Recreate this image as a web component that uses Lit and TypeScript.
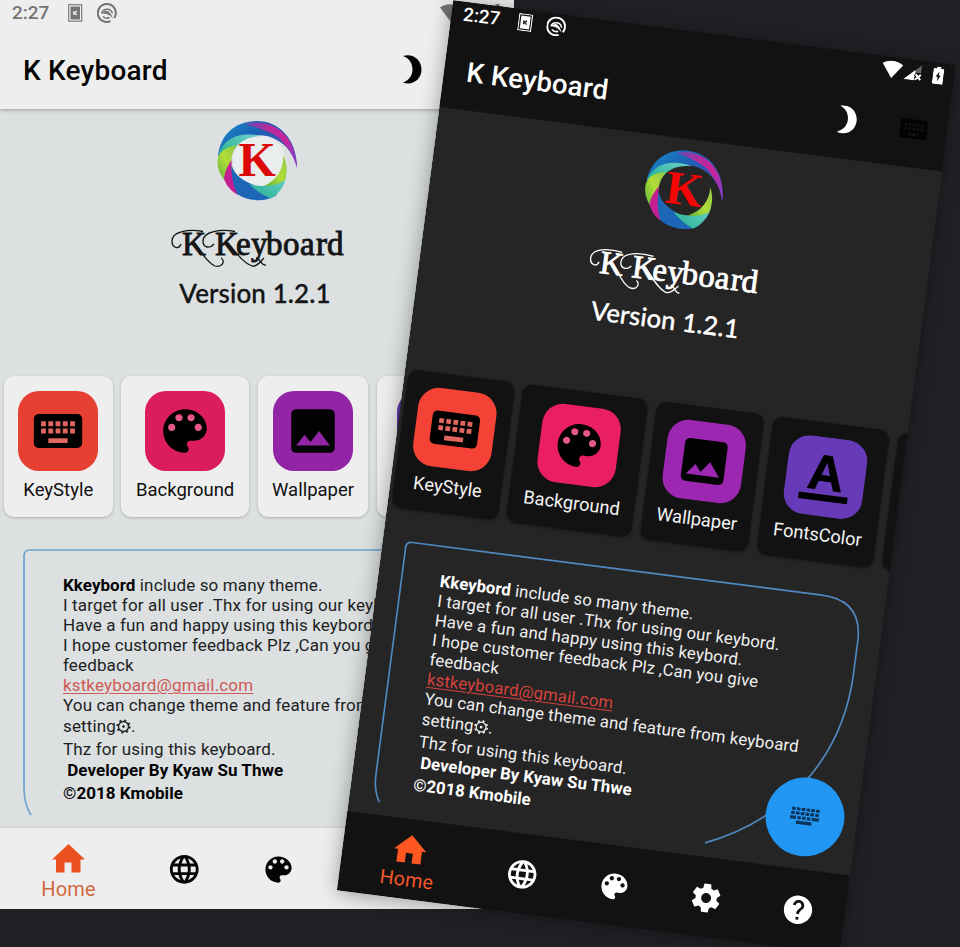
import { LitElement, html, svg, css } from "lit";
import { customElement, property } from "lit/decorators.js";

const KEYBOARD =
  "M20 5H4c-1.1 0-1.99.9-1.99 2L2 17c0 1.1.9 2 2 2h16c1.1 0 2-.9 2-2V7c0-1.1-.9-2-2-2zm-9 3h2v2h-2V8zm0 3h2v2h-2v-2zM8 8h2v2H8V8zm0 3h2v2H8v-2zm-1 2H5v-2h2v2zm0-3H5V8h2v2zm9 7H8v-2h8v2zm0-4h-2v-2h2v2zm0-3h-2V8h2v2zm3 3h-2v-2h2v2zm0-3h-2V8h2v2z";
const PALETTE =
  "M12 3c-4.97 0-9 4.03-9 9s4.03 9 9 9c.83 0 1.5-.67 1.5-1.5 0-.39-.15-.74-.39-1.01-.23-.26-.38-.61-.38-.99 0-.83.67-1.5 1.5-1.5H16c2.76 0 5-2.24 5-5 0-4.42-4.03-8-9-8zm-5.5 9c-.83 0-1.5-.67-1.5-1.5S5.67 9 6.5 9 8 9.67 8 10.5 7.33 12 6.5 12zm3-4C8.67 8 8 7.33 8 6.5S8.67 5 9.5 5s1.5.67 1.5 1.5S10.33 8 9.5 8zm5 0c-.83 0-1.5-.67-1.5-1.5S13.67 5 14.5 5s1.5.67 1.5 1.5S15.33 8 14.5 8zm3 4c-.83 0-1.5-.67-1.5-1.5S16.67 9 17.5 9s1.5.67 1.5 1.5-.67 1.5-1.5 1.5z";
const IMAGE =
  "M21 19V5c0-1.1-.9-2-2-2H5c-1.1 0-2 .9-2 2v14c0 1.1.9 2 2 2h14c1.1 0 2-.9 2-2zM8.5 13.5l2.5 3.01L14.5 12l4.5 6H5l3.5-4.5z";
const GLOBE =
  "M11.99 2C6.47 2 2 6.48 2 12s4.47 10 9.99 10C17.52 22 22 17.52 22 12S17.52 2 11.99 2zm6.93 6h-2.95c-.32-1.25-.78-2.45-1.38-3.56 1.84.63 3.37 1.91 4.33 3.56zM12 4.04c.83 1.2 1.48 2.53 1.91 3.96h-3.82c.43-1.43 1.08-2.76 1.91-3.96zM4.26 14C4.1 13.36 4 12.69 4 12s.1-1.36.26-2h3.38c-.08.66-.14 1.32-.14 2 0 .68.06 1.34.14 2H4.26zm.82 2h2.95c.32 1.25.78 2.45 1.38 3.56-1.84-.63-3.37-1.9-4.33-3.56zm2.95-8H5.08c.96-1.66 2.49-2.93 4.33-3.56C8.81 5.55 8.35 6.75 8.03 8zM12 19.96c-.83-1.2-1.48-2.53-1.91-3.96h3.82c-.43 1.43-1.08 2.76-1.91 3.96zM14.34 14H9.66c-.09-.66-.16-1.32-.16-2 0-.68.07-1.35.16-2h4.68c.09.65.16 1.32.16 2 0 .68-.07 1.34-.16 2zm.25 5.56c.6-1.11 1.06-2.31 1.38-3.56h2.95c-.96 1.65-2.49 2.93-4.33 3.56zM16.36 14c.08-.66.14-1.32.14-2 0-.68-.06-1.34-.14-2h3.38c.16.64.26 1.31.26 2s-.1 1.36-.26 2h-3.38z";
const SETTINGS =
  "M19.43 12.98c.04-.32.07-.64.07-.98s-.03-.66-.07-.98l2.11-1.65c.19-.15.24-.42.12-.64l-2-3.46c-.12-.22-.39-.3-.61-.22l-2.49 1c-.52-.4-1.08-.73-1.69-.98l-.38-2.65C14.46 2.18 14.25 2 14 2h-4c-.25 0-.46.18-.49.42l-.38 2.65c-.61.25-1.17.59-1.69.98l-2.49-1c-.23-.09-.49 0-.61.22l-2 3.46c-.13.22-.07.49.12.64l2.11 1.65c-.04.32-.07.65-.07.98s.03.66.07.98l-2.11 1.65c-.19.15-.24.42-.12.64l2 3.46c.12.22.39.3.61.22l2.49-1c.52.4 1.08.73 1.69.98l.38 2.65c.03.24.24.42.49.42h4c.25 0 .46-.18.49-.42l.38-2.65c.61-.25 1.17-.59 1.69-.98l2.49 1c.23.09.49 0 .61-.22l2-3.46c.12-.22.07-.49-.12-.64l-2.11-1.65zM12 15.5c-1.93 0-3.5-1.57-3.5-3.5s1.57-3.5 3.5-3.5 3.5 1.57 3.5 3.5-1.57 3.5-3.5 3.5z";
const HELP =
  "M12 2C6.48 2 2 6.48 2 12s4.48 10 10 10 10-4.48 10-10S17.52 2 12 2zm1 17h-2v-2h2v2zm2.07-7.75l-.9.92C13.45 12.9 13 13.5 13 15h-2v-.5c0-1.1.45-2.1 1.17-2.83l1.24-1.26c.37-.36.59-.86.59-1.41 0-1.1-.9-2-2-2s-2 .9-2 2H8c0-2.21 1.79-4 4-4s4 1.79 4 4c0 .88-.36 1.68-.93 2.25z";

const glyph = (d: string, size: number) => html`
  <svg width=${size} height=${size} viewBox="0 0 24 24"><path fill="currentColor" d=${d} /></svg>
`;

@customElement("swirl-logo")
class SwirlLogo extends LitElement {
  static styles = css`
    :host { display: block; width: 80px; height: 80px; }
    svg { display: block; overflow: visible; }
    .disc { fill: var(--logo-disc); }
    .letter { font: bold 48px "Liberation Serif", serif; fill: var(--logo-letter); }
  `;
  render() {
    return html`
      <svg width="80" height="80" viewBox="0 0 80 80">
        <defs>
          <linearGradient id="sky" x1="0" y1="0" x2="1" y2="0.6">
            <stop offset="0" stop-color="#1b8fcc" />
            <stop offset="0.45" stop-color="#1a62b4" />
            <stop offset="0.8" stop-color="#3b4fb0" />
            <stop offset="1" stop-color="#4a3fae" />
          </linearGradient>
          <linearGradient id="rose" x1="0" y1="0" x2="1" y2="0.6">
            <stop offset="0" stop-color="#5a4fb5" />
            <stop offset="0.4" stop-color="#b82a9c" />
            <stop offset="0.75" stop-color="#c8239a" />
            <stop offset="1" stop-color="#8d3cc0" />
          </linearGradient>
          <linearGradient id="sea" x1="0" y1="1" x2="1" y2="0">
            <stop offset="0" stop-color="#21b08e" />
            <stop offset="1" stop-color="#6fd0cb" />
          </linearGradient>
          <linearGradient id="lime" x1="0" y1="1" x2="1" y2="0">
            <stop offset="0" stop-color="#58b13a" />
            <stop offset="0.5" stop-color="#b2dc38" />
            <stop offset="1" stop-color="#8cc84a" />
          </linearGradient>
        </defs>
        <circle class="disc" cx="42" cy="40" r="26" />
        <path fill="url(#sky)" d="M1 36C3 12 20 0 40 0C62 0 80 18 80 47C76 30 66 20 52 15.500C35 12 12 16 1 36Z" />
        <path fill="url(#rose)" d="M27 3C50 -4 79 10 80 47C77 34 70 25 62 17C57 12 42 7 27 3Z" />
        <path fill="url(#sea)" d="M1 36C4 22 15 14 29 13.500C36 13.500 41 14 45 15C32 15 22 20 17 29C10 27 4 30 1 36Z" />
        <path fill="url(#lime)" d="M.6 42C.6 34 4 27 20 24C15 31 14 38 14.500 42L8 60C3 54 .6 47 .6 42Z" />
        <path fill="#c41e93" d="M14.500 39C14 52 17 60 21 74C12 69 8 62 7 57C8 50 11 44 14.500 39Z" />
        <path fill="#1d66b6" d="M14.500 44C19 60 36 63 60 74C48 82 30 80 20 73C16 64 14 54 14.500 44Z" />
        <path fill="url(#sea)" d="M32 63C50 68 62 63 69.500 52C69 64 62 73 54 77.500C46 74 39 70 32 63Z" />
        <path fill="url(#lime)" d="M66 34C71 43 70 54 68 59C62 63 55 65 47 65C60 59 67 48 66 34Z" />
        <text class="letter" x="21.500" y="55" textLength="37">K</text>
      </svg>
    `;
  }
}

@customElement("feature-card")
class FeatureCard extends LitElement {
  @property() label = "";
  @property() kind = "";
  static styles = css`
    :host { display: block; flex: none; }
    .card {
      box-sizing: border-box; height: 141px; padding-top: 15px; border-radius: 10px;
      background: var(--surface); box-shadow: var(--card-shadow);
      display: flex; flex-direction: column; align-items: center;
    }
    .tile {
      width: 80px; height: 80px; border-radius: 21px; flex: none;
      display: flex; align-items: center; justify-content: center; color: #020202;
    }
    .keys { background: var(--tile-red); }
    .palette { background: var(--tile-pink); }
    .image { background: var(--tile-purple); }
    .color { background: var(--tile-violet); }
    .label {
      margin-top: 7px; font-size: 18.500px; line-height: 24px; white-space: nowrap; color: var(--card-text);
    }
    .mark { font: bold 50px "Liberation Sans", sans-serif; stroke: currentColor; stroke-width: 1px; }
  `;
  private icon() {
    if (this.kind === "keys")
      return html`<svg width="58" height="58" viewBox="0 0 24 24">
        <rect x="4" y="7" width="16" height="11" fill="#e0665f" /><path d=${KEYBOARD} />
      </svg>`;
    if (this.kind === "palette")
      return html`<svg width="58" height="58" viewBox="0 0 24 24">
        <path fill="#e65b86" d="M5 9l3-3.500h8L19 9v3h-3V9H8v3H5z" /><path d=${PALETTE} />
      </svg>`;
    if (this.kind === "image") return glyph(IMAGE, 58);
    if (this.kind === "color")
      return html`<svg width="58" height="62" viewBox="0 0 58 62">
        <text class="mark" x="11" y="44">A</text><rect x="4" y="49" width="50" height="6.500" />
      </svg>`;
    return null;
  }
  render() {
    return html`
      <div class="card">
        <div class="tile ${this.kind}">${this.icon()}</div>
        <div class="label">${this.label}</div>
      </div>
    `;
  }
}

@customElement("phone-screen")
class PhoneScreen extends LitElement {
  static styles = css`
    :host {
      display: block; width: 514px; height: 909px; overflow: hidden;
      font-family: Roboto, "Liberation Sans", sans-serif;
    }
    svg { display: block; }
    .screen { height: 100%; display: flex; flex-direction: column; background: var(--page); }
    .top {
      height: 109px; flex: none; background: var(--surface); box-shadow: var(--bar-shadow);
      display: flex; flex-direction: column;
    }
    .status { height: 26px; padding: 0 11px 0 12px; display: flex; align-items: center; color: var(--status); }
    .clock { width: 56px; font-size: 19px; font-weight: 500; line-height: 26px; }
    .notice { margin-right: 14px; }
    .spacer { flex: 1; }
    .wifi { margin-right: 2px; }
    .signal { margin-right: 11px; }
    .title { flex: 1; padding: 6px 20px 0 23px; display: flex; align-items: center; color: var(--strong); }
    .name { font-size: 28px; font-weight: 500; line-height: 36px; flex: 1; letter-spacing: 0.2px; }
    .moon { margin: 0 44px 2px 0; }
    .kbd { color: var(--kbd); margin-bottom: 2px; }
    .hero { height: 267px; flex: none; padding-top: 12px; box-sizing: border-box; display: flex; flex-direction: column; align-items: center; }
    .wordmark { margin-top: 24px; color: var(--hero-text); overflow: visible; }
    .script { font: 33px "Liberation Serif", serif; fill: currentColor; stroke: currentColor; stroke-width: 0.9px; }
    .version {
      margin: 6px 4px 0 0; font: 500 26px/36px Lato, sans-serif; color: var(--hero-text); white-space: nowrap;
      letter-spacing: 0.1px; -webkit-text-stroke: 0.3px currentColor;
    }
    .cards { height: 141px; flex: none; display: flex; gap: 8.800px; padding-left: 4px; }
    .w1 { width: 108.500px; }
    .w2 { width: 127.700px; }
    .w3 { width: 110.500px; }
    .w4 { width: 119px; }
    .about { flex: 1; position: relative; }
    .outline { position: absolute; left: 0; top: 24px; }
    .copy { position: relative; padding: 58px 0 0 63px; font-size: 17px; letter-spacing: 0.140px; color: var(--text); }
    .line { height: 20px; line-height: 20px; white-space: pre; display: flex; align-items: center; }
    .tall { height: 23.500px; line-height: 23.500px; }
    .copy b { font-weight: 700; letter-spacing: 0.040px; color: var(--strong); }
    .mail { color: var(--link); text-decoration: underline; text-underline-offset: 2px; text-decoration-thickness: 1px; }
    .fab {
      position: absolute; left: 420.500px; top: 217.500px; width: 80px; height: 80px; border-radius: 50%;
      background: #2196f3; color: #0b3459; display: flex; align-items: center; justify-content: center;
    }
    .nav { height: 81px; flex: none; background: var(--surface); display: flex; color: var(--strong); box-shadow: var(--nav-shadow); position: relative; }
    .item { width: 94px; padding-top: 1px; display: flex; align-items: center; justify-content: center; }
    .home { width: 137px; padding-top: 8px; box-sizing: border-box; flex-direction: column; color: var(--accent); }
    .caption { font-size: 20px; line-height: 24px; margin-top: 4px; color: var(--accent-text); letter-spacing: 0.2px; }
  `;

  private status() {
    return html`
      <div class="status">
        <span class="clock">2:27</span>
        <svg class="notice" width="15" height="18" viewBox="0 0 15 18">
          <rect x="0.700" y="0.700" width="13" height="16.500" fill="none" stroke="currentColor" stroke-width="1.100" />
          <rect x="2.500" y="2.500" width="9.500" height="13" fill="currentColor" />
          <path d="M5.800 7v4M8.800 7L6.800 9l2 2" stroke="var(--surface)" stroke-width="1.300" fill="none" />
        </svg>
        <svg width="20" height="20" viewBox="0 0 20 20" fill="none" stroke="currentColor">
          <path d="M13.500 18.200A9 9 0 1 1 17.300 15" stroke-width="2" />
          <path d="M4.500 10.500A5.700 5.700 0 0 1 15.500 10.500" stroke-width="1.500" />
          <path d="M4.800 10.500C8 5.500 13 7 16 15.500C12.500 11.500 9.500 10.500 4.800 10.500Z" fill="currentColor" stroke="none" />
          <path d="M6 13.500Q9 16.500 12.500 14.500" stroke-width="1.600" />
        </svg>
        <span class="spacer"></span>
        <svg class="wifi" width="21" height="18" viewBox="0 0 21 18">
          <path fill="currentColor" d="M0 3.500C6 -.9 15 -.9 21 3.500L10.500 17.500Z" />
        </svg>
        <svg class="signal" width="18" height="16" viewBox="0 0 18 16">
          <path fill="currentColor" opacity="0.350" d="M0 16L17 0V8H12V16Z" />
          <path fill="currentColor" d="M0 16L11 5.500V16Z" />
          <path stroke="var(--surface)" stroke-width="4" d="M11.500 9.500l5.500 5.500M17 9.500l-5.500 5.500" />
          <path stroke="currentColor" stroke-width="2" d="M11.800 9.800l5.200 5.200M17 9.800l-5.200 5.200" />
        </svg>
        <svg width="11" height="18" viewBox="0 0 11 18">
          <path fill="currentColor" d="M3.500 0h4v2H10a1 1 0 0 1 1 1V17a1 1 0 0 1-1 1H1a1 1 0 0 1-1-1V3a1 1 0 0 1 1-1h2.500z" />
          <path fill="var(--surface)" d="M6.200 5L3 10.500h2V15l3-6H6.200z" />
        </svg>
      </div>
    `;
  }

  private wordmark() {
    const flourish = svg`
      <path d="M38 6.500C24 4 7 6 7 16C7 23 14 25 16 19" />
      <path d="M29 18C36 26 42 38 50 41C57 43 61 36 56 33" />
      <path d="M70 6.500C56 4 38 6 38 16C38 23 45 24 49 19" />
      <path d="M63 18C71 27 78 38 87 41C92 42 95 37 99 33" />
      <path d="M91 33C95 33 96 41 101 40" />
    `;
    return html`
      <svg class="wordmark" width="184" height="44" viewBox="0 0 184 44">
        <g fill="none" stroke="currentColor" stroke-width="1.300">${flourish}</g>
        <text class="script" x="17 50 71 86 101 118 135 151 162" y="30">KKeyboard</text>
      </svg>
    `;
  }

  private fabIcon() {
    const dots = [0, 1, 2, 3, 4, 5].map((i) => svg`
      <rect x=${1 + i * 4.9} y="0" width="3.600" height="3.200" />
      <rect x=${0.500 + i * 4.9} y="4.500" width="3.700" height="3.200" />
    `);
    return html`
      <svg width="30" height="18" viewBox="0 0 30 18" fill="currentColor">
        ${dots}
        <path d="M0 9h6v3.200H0zM7.500 9h3.500v3.200H7.500zM12.300 9h3.500v3.200h-3.500zM17 9h3.500v3.200H17zM22 9h7.500v3.200H22zM6.500 13.800h16v3.400h-16z" />
      </svg>
    `;
  }

  render() {
    return html`
      <div class="screen">
        <div class="top">
          ${this.status()}
          <div class="title">
            <span class="name">K Keyboard</span>
            <svg class="moon" width="19" height="29" viewBox="0 0 19 29">
              <path fill="currentColor" d="M0 1C10 -2 18.500 5 18.500 14.500C18.500 24 10 31 0 27.500C6.500 25 9.500 20 9.500 14.500C9.500 8 6 3 0 1Z" />
            </svg>
            <span class="kbd">
              <svg width="28" height="20" viewBox="2 5 20 14"><path fill="currentColor" d=${KEYBOARD} /></svg>
            </span>
          </div>
        </div>
        <div class="hero">
          <swirl-logo></swirl-logo>
          ${this.wordmark()}
          <div class="version">Version 1.2.1</div>
        </div>
        <div class="cards">
          <feature-card class="w1" kind="keys" label="KeyStyle"></feature-card>
          <feature-card class="w2" kind="palette" label="Background"></feature-card>
          <feature-card class="w3" kind="image" label="Wallpaper"></feature-card>
          <feature-card class="w4" kind="color" label="FontsColor"></feature-card>
          <feature-card class="w4"></feature-card>
        </div>
        <div class="about">
          <svg class="outline" width="514" height="285" viewBox="0 541 514 285">
            <path fill="none" stroke="var(--outline)" stroke-width="1.700"
              d="M31 815Q24 804 24 788V556Q24 550 30 550H449Q491 550 491 592V625C491 700 453 775 364 814" />
          </svg>
          <div class="copy">
            <div class="line"><b>Kkeybord</b> include so many theme.</div>
            <div class="line">I target for all user .Thx for using our keybord.</div>
            <div class="line">Have a fun and happy using this keybord.</div>
            <div class="line">I hope customer feedback Plz ,Can you give</div>
            <div class="line">feedback</div>
            <div class="line"><span class="mail">kstkeyboard@gmail.com</span></div>
            <div class="line">You can change theme and feature from keyboard</div>
            <div class="line tall">setting<svg width="15" height="15" viewBox="0 0 15 15" fill="none" stroke="currentColor">
                <circle cx="7.500" cy="7.500" r="5" stroke-width="1.300" />
                <circle cx="7.500" cy="7.500" r="6.300" stroke-width="1.600" stroke-dasharray="2 2.948" />
                <circle cx="7.500" cy="7.500" r="0.900" fill="currentColor" />
              </svg>.</div>
            <div class="line">Thz for using this keyboard.</div>
            <div class="line tall"><b> Developer By Kyaw Su Thwe</b></div>
            <div class="line tall"><b>©2018 Kmobile</b></div>
          </div>
          <div class="fab">${this.fabIcon()}</div>
        </div>
        <div class="nav">
          <div class="item home">
            <svg width="33" height="29" viewBox="0 0 33 29">
              <path fill="currentColor" d="M16.500 0L33 15.500H28.500V28.500H19.500V18.500H12.500V28.500H4V15.500H0Z" />
            </svg>
            <span class="caption">Home</span>
          </div>
          <div class="item">${glyph(GLOBE, 34.5)}</div>
          <div class="item">${glyph(PALETTE, 35)}</div>
          <div class="item">${glyph(SETTINGS, 34.5)}</div>
          <div class="item">${glyph(HELP, 34.5)}</div>
        </div>
      </div>
    `;
  }
}

@customElement("app-root")
class AppRoot extends LitElement {
  static styles = css`
    :host {
      display: block; position: relative; width: 960px; height: 947px; overflow: hidden; background: #202125;
    }
    phone-screen { position: absolute; left: 0; top: 0; }
    .light {
      --page: #dce0e1; --surface: #eeeeee; --status: #747474; --strong: #040404; --text: #1c1e1f;
      --hero-text: #131516; --card-text: #101010; --link: #cf5a55; --outline: #6ea3cd; --kbd: #040404;
      --accent: #ec5220; --accent-text: #d3683f; --logo-disc: #e9edee; --logo-letter: #dc0808;
      --tile-red: #e64033; --tile-pink: #dc1d5d; --tile-purple: #9125a5; --tile-violet: #5f36a9;
      --card-shadow: 0 1px 3px rgba(0, 0, 0, 0.22);
      --bar-shadow: 0 1px 4px rgba(0, 0, 0, 0.3);
      --nav-shadow: 0 -1px 2px rgba(0, 0, 0, 0.08);
    }
    .dark {
      --page: #252525; --surface: #121212; --status: #ffffff; --strong: #ffffff; --text: #f0f0f0;
      --hero-text: #ffffff; --card-text: #f4f4f4; --link: #d5423c; --outline: #5088c0; --kbd: #030303;
      --accent: #ff5722; --accent-text: #f4572a; --logo-disc: #252525; --logo-letter: #f40606;
      --tile-red: #f44336; --tile-pink: #e91e63; --tile-purple: #9c27b0; --tile-violet: #673ab7;
      --card-shadow: 0 1px 3px rgba(0, 0, 0, 0.35);
      --bar-shadow: none;
      --nav-shadow: none;
      transform-origin: 0 0;
      transform: matrix(0.978, 0.1255, -0.128, 0.979, 453.3, 0.3);
      box-shadow: 0 2px 20px rgba(0, 0, 0, 0.35);
    }
  `;
  render() {
    return html`
      <phone-screen class="light"></phone-screen>
      <phone-screen class="dark"></phone-screen>
    `;
  }
}
